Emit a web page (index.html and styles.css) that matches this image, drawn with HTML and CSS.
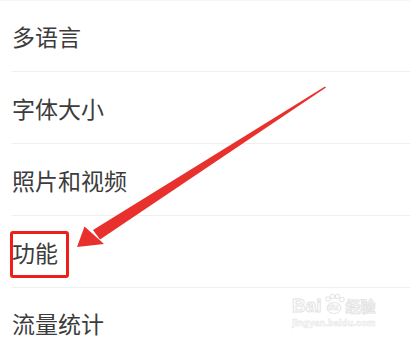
FILE: index.html
```html
<!DOCTYPE html>
<html lang="zh-CN">
<head>
<meta charset="utf-8">
<link rel="stylesheet" href="styles.css">
</head>
<body>
<div class="screen">
  <ul class="menu">
    <li class="item">多语言</li>
    <li class="item">字体大小</li>
    <li class="item">照片和视频</li>
    <li class="item">功能</li>
    <li class="item">流量统计</li>
  </ul>
  <div class="highlight"></div>
  <svg class="arrow" width="410" height="340" viewBox="0 0 410 340">
    <polygon points="325,85.5 326,86.5 100,238.5 93,229" fill="#e8302c"/>
    <polygon points="77,246 84.5,225.5 104,243" fill="#e8302c"/>
  </svg>
  <div class="watermark">
    <div class="wm-top">
      <span class="wm-bai">Bai</span>
      <span class="wm-paw">
        <svg width="22" height="22" viewBox="0 0 22 22">
          <ellipse cx="11" cy="15" rx="7" ry="5.5" fill="none" stroke="#e6e6e6" stroke-width="1.2"/>
          <circle cx="5" cy="6" r="2.2" fill="none" stroke="#e6e6e6" stroke-width="1.1"/>
          <circle cx="9.5" cy="3.5" r="2.2" fill="none" stroke="#e6e6e6" stroke-width="1.1"/>
          <circle cx="14.5" cy="3.5" r="2.2" fill="none" stroke="#e6e6e6" stroke-width="1.1"/>
          <circle cx="19" cy="6.5" r="2.2" fill="none" stroke="#e6e6e6" stroke-width="1.1"/>
        </svg>
        <span class="wm-du">du</span>
      </span>
      <span class="wm-jy">经验</span>
    </div>
    <div class="wm-url">jingyan.baidu.com</div>
  </div>
</div>
</body>
</html>
```
FILE: styles.css
```css
html, body {
  margin: 0;
  padding: 0;
  background: #ffffff;
}
.screen {
  position: relative;
  width: 410px;
  height: 340px;
  overflow: hidden;
  background: #ffffff;
  border-top: 1px solid #f6f6f6;
  box-sizing: border-box;
}
.menu {
  list-style: none;
  margin: 0 0 0 12px;
  padding: 0;
}
.item {
  height: 71px;
  border-bottom: 1px solid #efefef;
  display: flex;
  align-items: center;
  font-family: "Noto Sans CJK SC", "Noto Sans", sans-serif;
  font-size: 23px;
  line-height: 28px;
  color: #3c3c3c;
}
.item:first-child {
  height: 70px;
  padding-top: 0;
}
.item:last-child {
  height: 64px;
  border-bottom: none;
  align-items: flex-start;
  padding-top: 21px;
  box-sizing: border-box;
}
.highlight {
  position: absolute;
  left: 10px;
  top: 230px;
  width: 59px;
  height: 47px;
  border: 3px solid #ee1f1b;
  border-radius: 3px;
  box-sizing: border-box;
}
.arrow {
  position: absolute;
  left: 0;
  top: 0;
}
.watermark {
  position: absolute;
  left: 292px;
  top: 292px;
  font-family: "Liberation Sans", sans-serif;
  color: #ffffff;
  -webkit-text-stroke: 1px #e4e4e4;
}
.wm-top {
  display: flex;
  align-items: flex-end;
  gap: 1px;
}
.wm-bai {
  font-size: 19px;
  font-weight: bold;
  line-height: 18px;
}
.wm-paw {
  position: relative;
  width: 22px;
  height: 22px;
  display: inline-block;
}
.wm-paw svg {
  display: block;
}
.wm-du {
  position: absolute;
  left: 5px;
  top: 10px;
  font-size: 9px;
  font-weight: bold;
  line-height: 9px;
  -webkit-text-stroke: 0.6px #e4e4e4;
}
.wm-jy {
  font-family: "Noto Sans CJK SC", sans-serif;
  font-size: 15px;
  font-weight: bold;
  line-height: 18px;
}
.wm-url {
  margin-top: 3px;
  font-size: 9.5px;
  font-weight: bold;
  line-height: 10px;
  -webkit-text-stroke: 0.5px #e4e4e4;
}
```
